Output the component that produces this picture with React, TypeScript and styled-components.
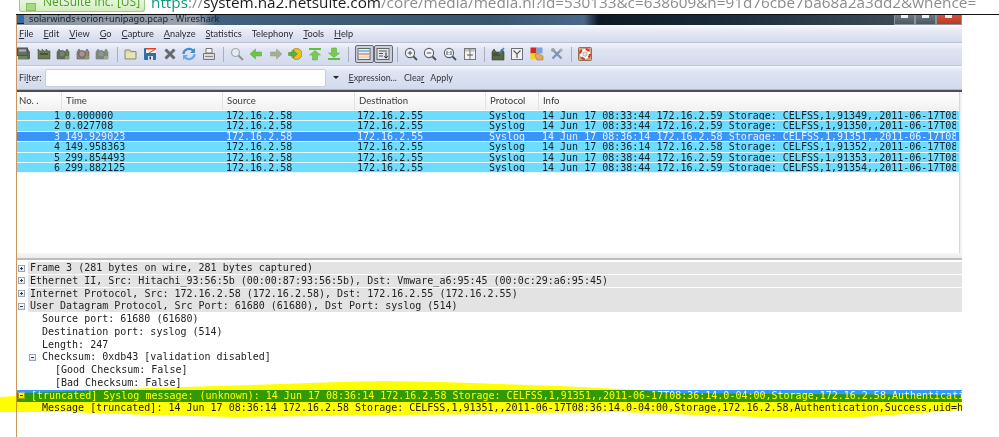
import React from 'react';
import styled, { createGlobalStyle } from 'styled-components';

const GlobalStyle = createGlobalStyle`
    html, body {
        margin: 0;
        padding: 0;
        background: #fff;
    }
`

const UI_FONT = `Lato, "Noto Sans", "Liberation Sans", sans-serif`;
const MONO_FONT = `"DejaVu Sans Mono", "Liberation Mono", monospace`;

const Page = styled.div`
    position: relative;
    width: 999px;
    height: 437px;
    overflow: hidden;
    background: #fff;
    display: flex;
    flex-direction: column;
    filter: blur(0.35px);
`
const AddressBar = styled.div`
    height: 14px;
    flex: none;
    display: flex;
    align-items: flex-start;
    padding-left: 19px;
    overflow: hidden;
`
const Badge = styled.div`
    width: 126px;
    height: 12px;
    flex: none;
    box-sizing: border-box;
    display: flex;
    align-items: flex-end;
    gap: 7px;
    padding-left: 6px;
    background: linear-gradient(#e6f6da, #d3edc0);
    border: 1px solid #9ccb87;
    border-top: 0;
    border-radius: 0 0 3px 3px;
    overflow: hidden;
`
const Lock = styled.div`
    width: 10px;
    height: 8px;
    flex: none;
    background: #a9d97c;
    border: 1px solid #8cbc62;
    box-sizing: border-box;
`
const BadgeText = styled.span`
    margin-bottom: 2px;
    font: 12px/15px "Open Sans", sans-serif;
    color: #4c9b2d;
    white-space: nowrap;
`
const Url = styled.div`
    margin: -9.5px 0 0 6px;
    font: 15.3px/22px "Open Sans", sans-serif;
    color: #8c8c8c;
    white-space: nowrap;
`
const Scheme = styled.span`
    color: #12977a;
`
const Host = styled.span`
    color: #1c1c1c;
`
const TopRule = styled.div`
    height: 1px;
    flex: none;
    margin-left: 16px;
    background: #111;
`
const Win = styled.div`
    flex: 1;
    width: 945px;
    margin-left: 16px;
    border-left: 1px solid #c9975f;
    display: flex;
    flex-direction: column;
    min-height: 0;
`
const TitleBar = styled.div`
    height: 10px;
    flex: none;
    display: flex;
    justify-content: space-between;
    overflow: hidden;
    background: linear-gradient(90deg, #8793a2 0%, #9aa3af 19%, #41607f 21%, #37566f 50%, #4a6888 60%, #0e1b27 61.5%, #1b2c3a 75%, #3c4b57 93%);
`
const TitleLeft = styled.div`
    display: flex;
    align-items: flex-start;
    gap: 5px;
`
const AppIcon = styled.div`
    width: 7px;
    height: 8px;
    background: #2d6ea8;
    border-bottom: 1px solid #123;
`
const TitleText = styled.span`
    margin-top: -2px;
    font: 9.2px/11px "Noto Sans", sans-serif;
    color: #1d2228;
    white-space: nowrap;
`
const WinButtons = styled.div`
    display: flex;
    width: 68px;
    flex: none;
`
const WinButton = styled.div<{ $close?: boolean }>`
    flex: ${p => (p.$close ? 1.3 : 1)};
    background: ${p => (p.$close ? 'linear-gradient(#d0553c, #b93a22)' : 'linear-gradient(#6e7a84, #4b5862)')};
    border: 1px solid #8a949c;
    border-top: 0;
    box-sizing: border-box;
    display: flex;
    justify-content: center;
    &::after {
        content: '';
        width: 7px;
        height: 3px;
        background: #f0f0f0;
    }
`
const MenuBar = styled.div`
    height: 18px;
    flex: none;
    box-sizing: border-box;
    display: flex;
    align-items: center;
    gap: 10px;
    padding-left: 2px;
    border-bottom: 1px solid #b9c0d2;
    background: linear-gradient(#fafbfe 0%, #e6eaf5 35%, #d4dbee 100%);
`
const MenuItem = styled.span`
    font: 9.2px/12px ${UI_FONT};
    color: #2b2b33;
    u {
        text-underline-offset: 1px;
    }
`
const ToolBar = styled.div`
    height: 23px;
    flex: none;
    box-sizing: border-box;
    display: flex;
    align-items: center;
    gap: 5.6px;
    border-bottom: 1px solid #c2c8d8;
    background: linear-gradient(#f2f4fb 0%, #dfe4f3 30%, #d3daee 100%);
`
const ToolIcon = styled.svg`
    width: 14px;
    height: 14px;
    flex: none;
`
const Sep = styled.div<{ $ml: number }>`
    width: 1px;
    height: 15px;
    flex: none;
    margin-left: ${p => p.$ml}px;
    background: #a9afbf;
`
const ToggleGroup = styled.div`
    display: flex;
    flex: none;
`
const Toggle = styled.div`
    width: 19px;
    height: 18px;
    box-sizing: border-box;
    display: flex;
    align-items: center;
    justify-content: center;
    border: 1px solid #666b75;
    border-radius: 2px;
    background: #c9cede;
`
const FilterBar = styled.div`
    height: 24px;
    flex: none;
    box-sizing: border-box;
    display: flex;
    align-items: center;
    padding-left: 2px;
    background: linear-gradient(#f4f6fc 0%, #dfe4f3 25%, #d3daee 100%);
    border-bottom: 1px solid #b5b5b5;
`
const BarLabel = styled.span<{ $ml?: number }>`
    margin-left: ${p => p.$ml ?? 0}px;
    font: 8.9px/12px ${UI_FONT};
    color: #33333b;
    white-space: nowrap;
`
const FilterInput = styled.div`
    width: 281px;
    height: 18px;
    flex: none;
    box-sizing: border-box;
    margin-left: 3px;
    background: #fff;
    border: 1px solid #c7cedd;
    border-radius: 2px;
`
const DropArrow = styled.div`
    width: 0;
    height: 0;
    flex: none;
    margin-left: 7px;
    border: 3px solid transparent;
    border-top: 3px solid #222;
    border-bottom: 0;
`
const ListPane = styled.div`
    height: 161px;
    flex: none;
    display: flex;
    border-top: 2px solid #4e4e4e;
    background: #fff;
`
const ListBody = styled.div`
    flex: 1;
    min-width: 0;
`
const ScrollEdge = styled.div`
    width: 3px;
    flex: none;
    box-sizing: border-box;
    background: #f1f1f1;
    border-left: 1px solid #d8d8d8;
`
const COLUMNS = '43px 161px 131px 132px 53px 1fr';
const HeaderRow = styled.div`
    height: 19px;
    box-sizing: border-box;
    display: grid;
    grid-template-columns: 44px 161px 132px 131px 53px 1fr;
    background: linear-gradient(#fff, #f1f1f1);
    border-bottom: 1px solid #fff;
`
const HeaderCell = styled.div<{ $first?: boolean }>`
    font: 9.6px/18px ${UI_FONT};
    color: #3a3a3a;
    padding-left: ${p => (p.$first ? 2 : 4)}px;
    border-left: ${p => (p.$first ? '0' : '1px solid #e2e2e2')};
`
const PacketRow = styled.div<{ $selected?: boolean }>`
    height: 10.4px;
    box-sizing: border-box;
    display: grid;
    grid-template-columns: ${COLUMNS};
    border-bottom: 1px solid #e4f7ff;
    background: ${p => (p.$selected ? '#3a94f7' : '#6edcff')};
    color: ${p => (p.$selected ? '#e6f1ff' : '#14222a')};
    font: 10px/9.4px ${MONO_FONT};
`
const Cell = styled.div<{ $right?: boolean }>`
    padding: ${p => (p.$right ? '0' : '0 0 0 5px')};
    text-align: ${p => (p.$right ? 'right' : 'left')};
    white-space: pre;
    overflow: hidden;
`
const InfoCell = styled(Cell)`
    margin-right: 3px;
`
const Splitter = styled.div`
    height: 7px;
    flex: none;
    box-sizing: border-box;
    background: linear-gradient(#f6f6f6, #ececec);
    border-bottom: 2px solid #bdbdbd;
`
const Details = styled.div`
    flex: 1;
    padding-top: 2px;
    display: flex;
    flex-direction: column;
`
const DetailRow = styled.div<{ $indent: number; $selected?: boolean }>`
    height: 12.75px;
    flex: none;
    box-sizing: border-box;
    display: flex;
    align-items: flex-start;
    padding-left: ${p => p.$indent}px;
    background: ${p => (p.$selected ? '#3399ff' : 'transparent')};
    color: ${p => (p.$selected ? '#fff' : '#222')};
    font: 10px/11.5px ${MONO_FONT};
    white-space: pre;
    overflow: hidden;
`
const Expander = styled.div`
    width: 7px;
    height: 7px;
    flex: none;
    box-sizing: border-box;
    margin: 2.5px 0 0 0;
    border: 1px solid #9aa6b8;
    background: linear-gradient(#fff, #dfe6f0);
    position: relative;
    &::after {
        content: '';
        position: absolute;
        left: 1px;
        right: 1px;
        top: 2px;
        height: 1px;
        background: #2a3b55;
    }
`
const Plus = styled(Expander)`
    &::before {
        content: '';
        position: absolute;
        top: 1px;
        bottom: 1px;
        left: 2px;
        width: 1px;
        background: #2a3b55;
    }
`
const TopLabel = styled.div`
    flex: 1;
    height: 12px;
    margin-left: 3px;
    padding-left: 2px;
    background: #e3e3e3;
    overflow: hidden;
`
const Marker = styled.svg`
    position: absolute;
    left: 0;
    top: 0;
    width: 999px;
    height: 437px;
    mix-blend-mode: multiply;
    pointer-events: none;
`
const InlineText = styled.span<{ $ml: number }>`
    margin-left: ${p => p.$ml}px;
`

const Finder = ({ stop, fade }: { stop?: boolean; fade?: boolean }) => (
    <ToolIcon viewBox="0 0 14 14" opacity={fade ? 0.7 : 0.9}>
        <path d="M1 5 L3 2 L5 5 L9 5 L11 2 L13 5 V12 H1 Z" fill={stop ? '#8b7d78' : '#5a6f45'} stroke="#3f4a3a" strokeWidth="0.6" />
        <circle cx="6" cy="7" r="3.4" fill={stop ? '#a5897f' : '#6b7570'} stroke="#40443f" strokeWidth="0.8" />
        <rect x="9" y="9" width="4" height="3" fill="#7c9455" />
    </ToolIcon>
);

const icons: Record<string, React.ReactNode> = {
    ifaces: (
        <ToolIcon viewBox="0 0 14 14" opacity={0.9}>
            <rect x="0.5" y="1" width="10" height="7.5" fill="#56625f" stroke="#3b4240" />
            <rect x="2" y="2.5" width="7" height="2" fill="#aab3af" />
            <path d="M1 9 H12 V12.5 H1 Z" fill="#5e7b48" />
            <path d="M11 2 L13 5 V12 H10 Z" fill="#4b5c3d" />
        </ToolIcon>
    ),
    options: <ToolIcon viewBox="0 0 14 14" opacity={0.9}><path d="M1 5 L1 2 L3 4 L5 4 L5 2 L7 4 L9 4 L9 2 L11 4 L13 4 V12 H1 Z" fill="#5a6f45" stroke="#39452f" strokeWidth="0.6" /><rect x="3" y="6" width="8" height="2" fill="#39452f" /></ToolIcon>,
    start: <Finder />,
    stop: <Finder stop />,
    restart: <Finder fade />,
    open: <ToolIcon viewBox="0 0 14 14"><path d="M1 3 H6 L7 4.5 H12 V12 H1 Z" fill="#d9d8a9" stroke="#8b8b70" /><rect x="2" y="6" width="9" height="5" fill="#e5e4bd" /></ToolIcon>,
    save: <ToolIcon viewBox="0 0 14 14"><rect x="1" y="1" width="12" height="12" rx="1" fill="#2f6fae" /><rect x="3" y="1" width="10" height="5" fill="#f5f2ea" /><rect x="3" y="1" width="10" height="1.5" fill="#d8402a" /><path d="M6 6 L12 2.5" stroke="#d8402a" /><rect x="5" y="9" width="5" height="4" fill="#e4e4e4" /><rect x="6.5" y="9.5" width="1.5" height="3" fill="#2a3b55" /></ToolIcon>,
    close: <ToolIcon viewBox="0 0 14 14"><path d="M2.5 2.5 L11.5 11.5 M11.5 2.5 L2.5 11.5" stroke="#666a6e" strokeWidth="3" /></ToolIcon>,
    reload: <ToolIcon viewBox="0 0 14 14"><path d="M1.5 7 A5.5 5 0 0 1 11 3.5" fill="none" stroke="#3f8bd8" strokeWidth="2.2" /><path d="M12.5 7 A5.5 5 0 0 1 3 10.5" fill="none" stroke="#6aa9e6" strokeWidth="2.2" /><path d="M13 1 V6 H8 Z" fill="#3f8bd8" /><path d="M1 13 V8 H6 Z" fill="#6aa9e6" /></ToolIcon>,
    print: <ToolIcon viewBox="0 0 14 14"><path d="M4 1.5 H10 V6 H4 Z" fill="#f4f4f4" stroke="#777" /><path d="M1.5 6.5 H12.5 V12.5 H1.5 Z" fill="#dcdcdc" stroke="#777" /><path d="M3 9.5 H11" stroke="#888" /></ToolIcon>,
    find: <ToolIcon viewBox="0 0 14 14"><circle cx="5.5" cy="5.5" r="4" fill="#e6eaf2" stroke="#a5a8ad" strokeWidth="1.2" /><path d="M8.5 8.5 L13 13" stroke="#8c8f94" strokeWidth="2" /></ToolIcon>,
    back: <ToolIcon viewBox="0 0 14 14"><path d="M1 7 L6.5 2 V5 H12.5 V9 H6.5 V12 Z" fill="#6cc544" stroke="#54a435" strokeWidth="0.5" /></ToolIcon>,
    forward: <ToolIcon viewBox="0 0 14 14"><path d="M13 7 L7.5 2 V5 H1.5 V9 H7.5 V12 Z" fill="#a3b096" stroke="#8e9a84" strokeWidth="0.5" /></ToolIcon>,
    jump: <ToolIcon viewBox="0 0 14 14"><circle cx="8.5" cy="7" r="5.5" fill="#e8c22e" stroke="#b3911f" /><path d="M0.5 7 L5 3 V5.5 H9.5 V8.5 H5 V11 Z" transform="rotate(180 5 7)" fill="#56b23a" stroke="#3f8f2a" strokeWidth="0.5" /></ToolIcon>,
    first: <ToolIcon viewBox="0 0 14 14"><rect x="1" y="1" width="12" height="2" fill="#62bf3e" /><path d="M7 3.5 L12.5 8 H9.5 V13 H4.5 V8 H1.5 Z" fill="#76cc4e" stroke="#57a738" strokeWidth="0.5" /></ToolIcon>,
    last: <ToolIcon viewBox="0 0 14 14"><rect x="1" y="11" width="12" height="2" fill="#62bf3e" /><path d="M7 10.5 L12.5 6 H9.5 V1 H4.5 V6 H1.5 Z" fill="#76cc4e" stroke="#57a738" strokeWidth="0.5" /></ToolIcon>,
    zoomIn: <ToolIcon viewBox="0 0 14 14"><circle cx="6" cy="6" r="4.6" fill="#f1f3f8" stroke="#5d6168" strokeWidth="1.1" /><path d="M3.8 6 H8.2 M6 3.8 V8.2" stroke="#4c5056" /><path d="M9.5 9.5 L13 13" stroke="#4c5056" strokeWidth="1.8" /></ToolIcon>,
    zoomOut: <ToolIcon viewBox="0 0 14 14"><circle cx="6" cy="6" r="4.6" fill="#f1f3f8" stroke="#5d6168" strokeWidth="1.1" /><path d="M3.8 6 H8.2" stroke="#4c5056" /><path d="M9.5 9.5 L13 13" stroke="#4c5056" strokeWidth="1.8" /></ToolIcon>,
    zoomReset: <ToolIcon viewBox="0 0 14 14"><circle cx="6" cy="6" r="4.6" fill="#f1f3f8" stroke="#5d6168" strokeWidth="1.1" /><path d="M4 4 V8 M8 4 V8 M6 5 V5.6 M6 7 V7.6" stroke="#4c5056" /><path d="M9.5 9.5 L13 13" stroke="#4c5056" strokeWidth="1.8" /></ToolIcon>,
    resize: <ToolIcon viewBox="0 0 14 14"><rect x="1.5" y="1.5" width="11" height="11" fill="#f1f2f5" stroke="#777" /><rect x="2" y="2" width="10" height="2.5" fill="#b9bfcc" /><path d="M7 2 V12" stroke="#777" /><path d="M4 8 H10" stroke="#555" /></ToolIcon>,
    capFilter: <ToolIcon viewBox="0 0 14 14"><path d="M1 5 L3 2 L5 5 L9 5 L11 2 L13 5 V13 H1 Z" fill="#55683f" stroke="#333d2a" strokeWidth="0.6" /><rect x="2" y="6" width="7" height="3" fill="#46504a" /><path d="M8 7 L13 1" stroke="#3f7fc4" strokeWidth="1.4" /></ToolIcon>,
    dispFilter: <ToolIcon viewBox="0 0 14 14"><rect x="1.5" y="1.5" width="11" height="11" fill="#f0f1f4" stroke="#6c6f75" /><path d="M3.5 3.5 L7 7 L10.5 3.5 M7 7 V11" fill="none" stroke="#5a5e64" strokeWidth="1.2" /></ToolIcon>,
    colors: <ToolIcon viewBox="0 0 14 14"><rect x="0.5" y="0.5" width="6" height="6" fill="#d8261c" /><rect x="6.5" y="0.5" width="6" height="6" fill="#7ba6dc" /><rect x="0.5" y="6.5" width="6" height="6" fill="#f2d21f" /><path d="M5 8 Q7 5 9 7 L13 9 V13 H7 Z" fill="#e0a866" stroke="#a9783e" strokeWidth="0.6" /></ToolIcon>,
    prefs: <ToolIcon viewBox="0 0 14 14"><path d="M2.5 2.5 L11.5 11.5" stroke="#8a939c" strokeWidth="2.4" /><path d="M11.5 2.5 L2.5 11.5" stroke="#6f9ac8" strokeWidth="2.4" /><circle cx="3" cy="3" r="2" fill="#9aa3ac" /><circle cx="11" cy="3" r="1.6" fill="#a6adb5" /></ToolIcon>,
    help: <ToolIcon viewBox="0 0 14 14"><rect x="0.5" y="0.5" width="13" height="13" rx="1" fill="#c9a988" stroke="#8e7355" /><circle cx="7" cy="7" r="5" fill="#fff" stroke="#d8352a" strokeWidth="2.2" strokeDasharray="3.9 4" /><circle cx="7" cy="7" r="2.2" fill="#e9e4da" stroke="#8e7355" strokeWidth="0.5" /></ToolIcon>,
};

const ToolGroup = ({ names }: { names: string[] }) => (
    <>{names.map(n => <React.Fragment key={n}>{icons[n]}</React.Fragment>)}</>
);

const menus: [string, string][] = [
    ['F', 'ile'], ['E', 'dit'], ['V', 'iew'], ['G', 'o'], ['C', 'apture'], ['A', 'nalyze'],
    ['S', 'tatistics'], ['', 'Telephony'], ['T', 'ools'], ['H', 'elp'],
];

const packets = [
    { no: 1, time: '0.000000', src: '172.16.2.58', time2: '08:33:44 172.16.2.59', id: '91349' },
    { no: 2, time: '0.027708', src: '172.16.2.58', time2: '08:33:44 172.16.2.59', id: '91350' },
    { no: 3, time: '149.929023', src: '172.16.2.58', time2: '08:36:14 172.16.2.58', id: '91351' },
    { no: 4, time: '149.958363', src: '172.16.2.58', time2: '08:36:14 172.16.2.58', id: '91352' },
    { no: 5, time: '299.854493', src: '172.16.2.58', time2: '08:38:44 172.16.2.59', id: '91353' },
    { no: 6, time: '299.882125', src: '172.16.2.58', time2: '08:38:44 172.16.2.59', id: '91354' },
];

const markerPoints = '0,397 16,396 17,393 60,392 100,390 150,388 250,385 340,382 383,381 440,382 500,384 560,386 600,388 640,390 667,393 800,394 961,395 962,410 920,413 860,417 793,418 700,415 620,412 520,413 500,414 400,415 233,417 150,415 67,412 0,412';

export default function App() {
    return (
        <Page>
            <GlobalStyle />
            <AddressBar>
                <Badge>
                    <Lock />
                    <BadgeText>NetSuite Inc. [US]</BadgeText>
                </Badge>
                <Url>
                    <Scheme>https</Scheme>://<Host>system.na2.netsuite.com</Host>/core/media/media.nl?id=530133&amp;c=638609&amp;h=91d76cbe7ba68a2a3dd2&amp;whence=
                </Url>
            </AddressBar>
            <TopRule />
            <Win>
                <TitleBar>
                    <TitleLeft>
                        <AppIcon />
                        <TitleText>solarwinds+orion+unipago.pcap - Wireshark</TitleText>
                    </TitleLeft>
                    <WinButtons>
                        <WinButton />
                        <WinButton />
                        <WinButton $close />
                    </WinButtons>
                </TitleBar>
                <MenuBar>
                    {menus.map(([key, rest]) => (
                        <MenuItem key={key + rest}>{key ? <u>{key}</u> : null}{rest}</MenuItem>
                    ))}
                </MenuBar>
                <ToolBar>
                    <ToolGroup names={['ifaces', 'options', 'start', 'stop', 'restart']} />
                    <Sep $ml={2} />
                    <ToolGroup names={['open', 'save', 'close', 'reload', 'print']} />
                    <Sep $ml={1.4} />
                    <ToolGroup names={['find', 'back', 'forward', 'jump', 'first', 'last']} />
                    <Sep $ml={1} />
                    <ToggleGroup>
                        <Toggle>
                            <ToolIcon viewBox="0 0 14 14">
                                <rect x="1" y="1.5" width="12" height="11" fill="#eee" stroke="#666" />
                                <rect x="2" y="3" width="10" height="2" fill="#6fd0d8" />
                                <rect x="2" y="6" width="10" height="2" fill="#e59ac4" />
                                <rect x="2" y="9" width="10" height="2" fill="#e8e08a" />
                            </ToolIcon>
                        </Toggle>
                        <Toggle>
                            <ToolIcon viewBox="0 0 14 14">
                                <rect x="1" y="1.5" width="12" height="11" fill="#e4e6ec" stroke="#666" />
                                <path d="M3 4 H11 M3 6.5 H7 M3 9 H7" stroke="#555" />
                                <path d="M10 5.5 V11 M8.3 9.3 L10 11.2 L11.7 9.3" fill="none" stroke="#222" />
                            </ToolIcon>
                        </Toggle>
                    </ToggleGroup>
                    <Sep $ml={-1} />
                    <ToolGroup names={['zoomIn', 'zoomOut', 'zoomReset', 'resize']} />
                    <Sep $ml={2} />
                    <ToolGroup names={['capFilter', 'dispFilter', 'colors', 'prefs']} />
                    <Sep $ml={2} />
                    {icons.help}
                </ToolBar>
                <FilterBar>
                    <BarLabel>Fi<u>l</u>ter:</BarLabel>
                    <FilterInput />
                    <DropArrow />
                    <BarLabel $ml={10}><u>E</u>xpression...</BarLabel>
                    <BarLabel $ml={7}>Clea<u>r</u></BarLabel>
                    <BarLabel $ml={6}>Apply</BarLabel>
                </FilterBar>
                <ListPane>
                    <ListBody>
                        <HeaderRow>
                            <HeaderCell $first>No. .</HeaderCell>
                            <HeaderCell>Time</HeaderCell>
                            <HeaderCell>Source</HeaderCell>
                            <HeaderCell>Destination</HeaderCell>
                            <HeaderCell>Protocol</HeaderCell>
                            <HeaderCell>Info</HeaderCell>
                        </HeaderRow>
                        {packets.map(p => (
                            <PacketRow key={p.no} $selected={p.no === 3}>
                                <Cell $right>{p.no}</Cell>
                                <Cell>{p.time}</Cell>
                                <Cell>{p.src}</Cell>
                                <Cell>172.16.2.55</Cell>
                                <Cell>Syslog</Cell>
                                <InfoCell>{`14 Jun 17 ${p.time2} Storage: CELFSS,1,${p.id},,2011-06-17T08:36:14.0-04:00`}</InfoCell>
                            </PacketRow>
                        ))}
                    </ListBody>
                    <ScrollEdge />
                </ListPane>
                <Splitter />
                <Details>
                    <DetailRow $indent={1}><Plus /><TopLabel>Frame 3 (281 bytes on wire, 281 bytes captured)</TopLabel></DetailRow>
                    <DetailRow $indent={1}><Plus /><TopLabel>Ethernet II, Src: Hitachi_93:56:5b (00:00:87:93:56:5b), Dst: Vmware_a6:95:45 (00:0c:29:a6:95:45)</TopLabel></DetailRow>
                    <DetailRow $indent={1}><Plus /><TopLabel>Internet Protocol, Src: 172.16.2.58 (172.16.2.58), Dst: 172.16.2.55 (172.16.2.55)</TopLabel></DetailRow>
                    <DetailRow $indent={1}><Expander /><TopLabel>User Datagram Protocol, Src Port: 61680 (61680), Dst Port: syslog (514)</TopLabel></DetailRow>
                    <DetailRow $indent={25}>Source port: 61680 (61680)</DetailRow>
                    <DetailRow $indent={25}>Destination port: syslog (514)</DetailRow>
                    <DetailRow $indent={25}>Length: 247</DetailRow>
                    <DetailRow $indent={12}><Expander /><InlineText $ml={6}>Checksum: 0xdb43 [validation disabled]</InlineText></DetailRow>
                    <DetailRow $indent={38}>[Good Checksum: False]</DetailRow>
                    <DetailRow $indent={38}>[Bad Checksum: False]</DetailRow>
                    <DetailRow $indent={1} $selected><Expander /><InlineText $ml={6}>[truncated] Syslog message: (unknown): 14 Jun 17 08:36:14 172.16.2.58 Storage: CELFSS,1,91351,,2011-06-17T08:36:14.0-04:00,Storage,172.16.2.58,Authentication</InlineText></DetailRow>
                    <DetailRow $indent={25}>Message [truncated]: 14 Jun 17 08:36:14 172.16.2.58 Storage: CELFSS,1,91351,,2011-06-17T08:36:14.0-04:00,Storage,172.16.2.58,Authentication,Success,uid=hyperic</DetailRow>
                </Details>
            </Win>
            <Marker viewBox="0 0 999 437">
                <polygon points={markerPoints} fill="#ffff00" />
            </Marker>
        </Page>
    );
}
